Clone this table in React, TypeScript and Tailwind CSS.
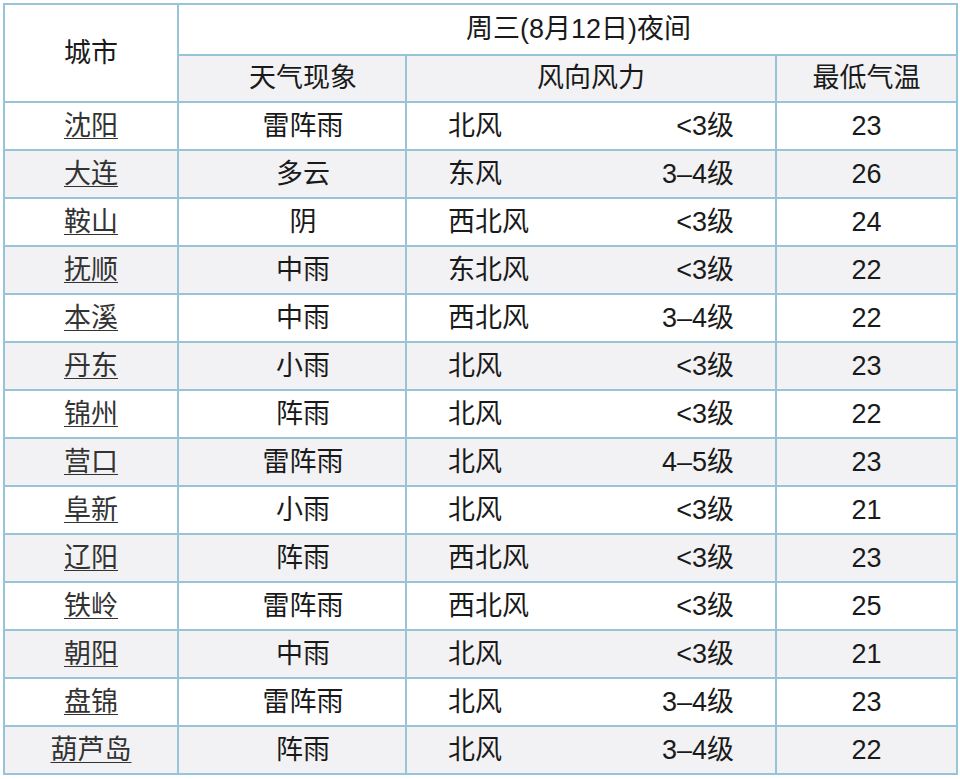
import React from "react";

const rows: [string, string, string, string, string][] = [
  ["沈阳", "雷阵雨", "北风", "<3级", "23"],
  ["大连", "多云", "东风", "3–4级", "26"],
  ["鞍山", "阴", "西北风", "<3级", "24"],
  ["抚顺", "中雨", "东北风", "<3级", "22"],
  ["本溪", "中雨", "西北风", "3–4级", "22"],
  ["丹东", "小雨", "北风", "<3级", "23"],
  ["锦州", "阵雨", "北风", "<3级", "22"],
  ["营口", "雷阵雨", "北风", "4–5级", "23"],
  ["阜新", "小雨", "北风", "<3级", "21"],
  ["辽阳", "阵雨", "西北风", "<3级", "23"],
  ["铁岭", "雷阵雨", "西北风", "<3级", "25"],
  ["朝阳", "中雨", "北风", "<3级", "21"],
  ["盘锦", "雷阵雨", "北风", "3–4级", "23"],
  ["葫芦岛", "阵雨", "北风", "3–4级", "22"],
];

export default function App() {
  return (
    <div
      className="w-[960px] h-[779px] bg-white overflow-hidden pl-[3px] pt-[3px] text-[#1a1a1a]"
      style={{ fontFamily: '"Liberation Sans", "Noto Sans CJK SC", sans-serif' }}
    >
      <table className="border-collapse table-fixed w-[953px] text-[27px] leading-none">
        <colgroup>
          <col className="w-[174px]" />
          <col className="w-[228px]" />
          <col className="w-[370px]" />
          <col className="w-[181px]" />
        </colgroup>
        <thead>
          <tr className="h-[51px]">
            <th
              rowSpan={2}
              className="border-2 border-[#98c4d8] bg-white font-normal text-center align-middle"
            >
              城市
            </th>
            <th
              colSpan={3}
              className="border-2 border-[#98c4d8] bg-white font-normal text-center align-middle pl-[22px]"
            >
              周三(8月12日)夜间
            </th>
          </tr>
          <tr className="h-[47px] bg-[#f2f2f4]">
            <th className="border-2 border-[#98c4d8] font-normal text-center align-middle pl-[22px]">
              天气现象
            </th>
            <th className="border-2 border-[#98c4d8] font-normal text-center align-middle">
              风向风力
            </th>
            <th className="border-2 border-[#98c4d8] font-normal text-center align-middle">
              最低气温
            </th>
          </tr>
        </thead>
        <tbody>
          {rows.map((r, i) => (
            <tr
              key={r[0]}
              className={"h-[48px] " + (i % 2 === 1 ? "bg-[#f2f2f4]" : "bg-white")}
            >
              <td className="border-2 border-[#98c4d8] text-center align-middle">
                <span className="underline underline-offset-[3px] decoration-1 text-[#333]">
                  {r[0]}
                </span>
              </td>
              <td className="border-2 border-[#98c4d8] text-center align-middle pl-[22px]">
                {r[1]}
              </td>
              <td className="border-2 border-[#98c4d8] align-middle pl-[41px] pr-[41px]">
                <div className="flex justify-between items-center">
                  <span>{r[2]}</span>
                  <span>{r[3]}</span>
                </div>
              </td>
              <td className="border-2 border-[#98c4d8] text-center align-middle">{r[4]}</td>
            </tr>
          ))}
        </tbody>
      </table>
    </div>
  );
}
